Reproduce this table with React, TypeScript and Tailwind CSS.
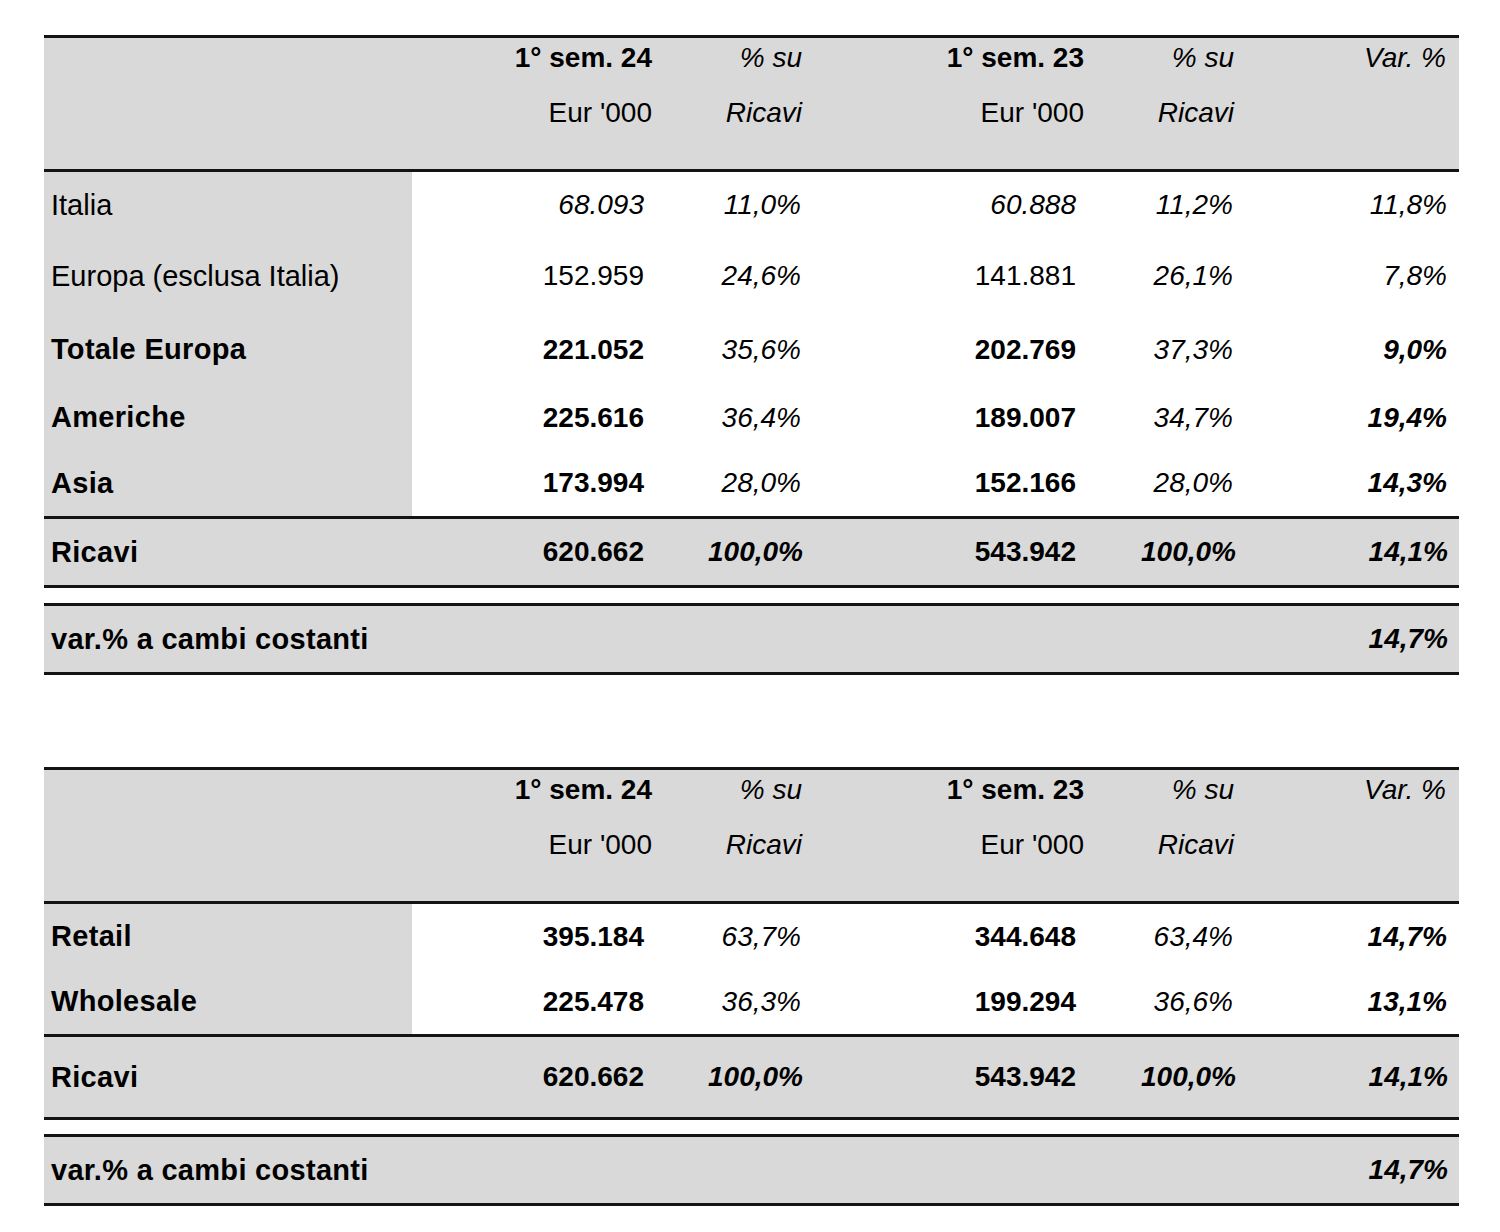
import React from "react";
import clsx from "clsx";

type V = { t: string; b?: boolean; i?: boolean };

const colW = ["w-[248px]", "w-[150px]", "w-[282px]", "w-[150px]", "w-[217px]"];
const dataPr = ["pr-[16px]", "pr-[9px]", "pr-[16px]", "pr-[9px]", "pr-[12px]"];
const totPr = ["pr-[16px]", "pr-[7px]", "pr-[16px]", "pr-[6px]", "pr-[11px]"];
const headPr = ["pr-[8px]", "pr-[8px]", "pr-[8px]", "pr-[8px]", "pr-[13px]"];

const Header = () => {
  const cols = [
    { a: "1° sem. 24", aCls: "font-bold", b: "Eur '000", bCls: "" },
    { a: "% su", aCls: "italic", b: "Ricavi", bCls: "italic" },
    { a: "1° sem. 23", aCls: "font-bold", b: "Eur '000", bCls: "" },
    { a: "% su", aCls: "italic", b: "Ricavi", bCls: "italic" },
    { a: "Var. %", aCls: "italic", b: "", bCls: "" },
  ];
  return (
    <div className="flex h-[131px] bg-[#d9d9d9] border-b-[3px] border-[#141414] box-content">
      <div className="w-[368px]" />
      {cols.map((c, k) => (
        <div
          key={k}
          className={clsx("flex flex-col items-end pt-[6px] gap-[27px]", colW[k], headPr[k])}
        >
          <span className={clsx("leading-[28px] whitespace-nowrap", c.aCls)}>{c.a}</span>
          <span className={clsx("leading-[28px] whitespace-nowrap h-[28px]", c.bCls)}>{c.b}</span>
        </div>
      ))}
    </div>
  );
};

const Row = ({
  label,
  lb,
  vals,
  h,
  total,
}: {
  label: string;
  lb?: boolean;
  vals: V[];
  h: string;
  total?: boolean;
}) => (
  <div className={clsx("flex", h, total && "bg-[#d9d9d9]")}>
    <div
      className={clsx(
        "w-[368px] flex items-center pl-[7px] bg-[#d9d9d9] leading-none whitespace-nowrap text-[29px]",
        lb && "font-bold tracking-[0.3px]"
      )}
    >
      {label}
    </div>
    {vals.map((v, k) => (
      <div
        key={k}
        className={clsx(
          "flex items-center justify-end leading-none whitespace-nowrap",
          colW[k],
          total ? totPr[k] : dataPr[k],
          v.b && "font-bold",
          v.i && "italic"
        )}
      >
        {v.t}
      </div>
    ))}
  </div>
);

const Ricavi = ({ h }: { h: string }) => (
  <div className="border-t-[3px] border-b-[3px] border-[#141414]">
    <Row
      label="Ricavi"
      lb
      total
      h={h}
      vals={[
        { t: "620.662", b: true },
        { t: "100,0%", b: true, i: true },
        { t: "543.942", b: true },
        { t: "100,0%", b: true, i: true },
        { t: "14,1%", b: true, i: true },
      ]}
    />
  </div>
);

const Cambi = ({ mt }: { mt: string }) => (
  <div className={clsx("border-t-[3px] border-b-[3px] border-[#141414]", mt)}>
    <Row
      label="var.% a cambi costanti"
      lb
      total
      h="h-[66px]"
      vals={[{ t: "" }, { t: "" }, { t: "" }, { t: "" }, { t: "14,7%", b: true, i: true }]}
    />
  </div>
);

export default function App() {
  return (
    <div
      className="w-[1500px] h-[1232px] bg-white text-black text-[28px]"
      style={{ fontFamily: '"Liberation Sans", Arial, sans-serif' }}
    >
      <div className="ml-[44px] w-[1415px] pt-[35px]">
        {/* Area geografica */}
        <div className="border-t-[3px] border-[#141414]">
          <Header />
          <Row
            label="Italia"
            h="h-[66px]"
            vals={[
              { t: "68.093", i: true },
              { t: "11,0%", i: true },
              { t: "60.888", i: true },
              { t: "11,2%", i: true },
              { t: "11,8%", i: true },
            ]}
          />
          <Row
            label="Europa (esclusa Italia)"
            h="h-[76px]"
            vals={[
              { t: "152.959" },
              { t: "24,6%", i: true },
              { t: "141.881" },
              { t: "26,1%", i: true },
              { t: "7,8%", i: true },
            ]}
          />
          <Row
            label="Totale Europa"
            lb
            h="h-[71px]"
            vals={[
              { t: "221.052", b: true },
              { t: "35,6%", i: true },
              { t: "202.769", b: true },
              { t: "37,3%", i: true },
              { t: "9,0%", b: true, i: true },
            ]}
          />
          <Row
            label="Americhe"
            lb
            h="h-[65px]"
            vals={[
              { t: "225.616", b: true },
              { t: "36,4%", i: true },
              { t: "189.007", b: true },
              { t: "34,7%", i: true },
              { t: "19,4%", b: true, i: true },
            ]}
          />
          <Row
            label="Asia"
            lb
            h="h-[66px]"
            vals={[
              { t: "173.994", b: true },
              { t: "28,0%", i: true },
              { t: "152.166", b: true },
              { t: "28,0%", i: true },
              { t: "14,3%", b: true, i: true },
            ]}
          />
        </div>
        <Ricavi h="h-[66px]" />
        <Cambi mt="mt-[15px]" />

        {/* Canale distributivo */}
        <div className="mt-[92px] border-t-[3px] border-[#141414]">
          <Header />
          <Row
            label="Retail"
            lb
            h="h-[65px]"
            vals={[
              { t: "395.184", b: true },
              { t: "63,7%", i: true },
              { t: "344.648", b: true },
              { t: "63,4%", i: true },
              { t: "14,7%", b: true, i: true },
            ]}
          />
          <Row
            label="Wholesale"
            lb
            h="h-[65px]"
            vals={[
              { t: "225.478", b: true },
              { t: "36,3%", i: true },
              { t: "199.294", b: true },
              { t: "36,6%", i: true },
              { t: "13,1%", b: true, i: true },
            ]}
          />
        </div>
        <Ricavi h="h-[80px]" />
        <Cambi mt="mt-[14px]" />
      </div>
    </div>
  );
}
